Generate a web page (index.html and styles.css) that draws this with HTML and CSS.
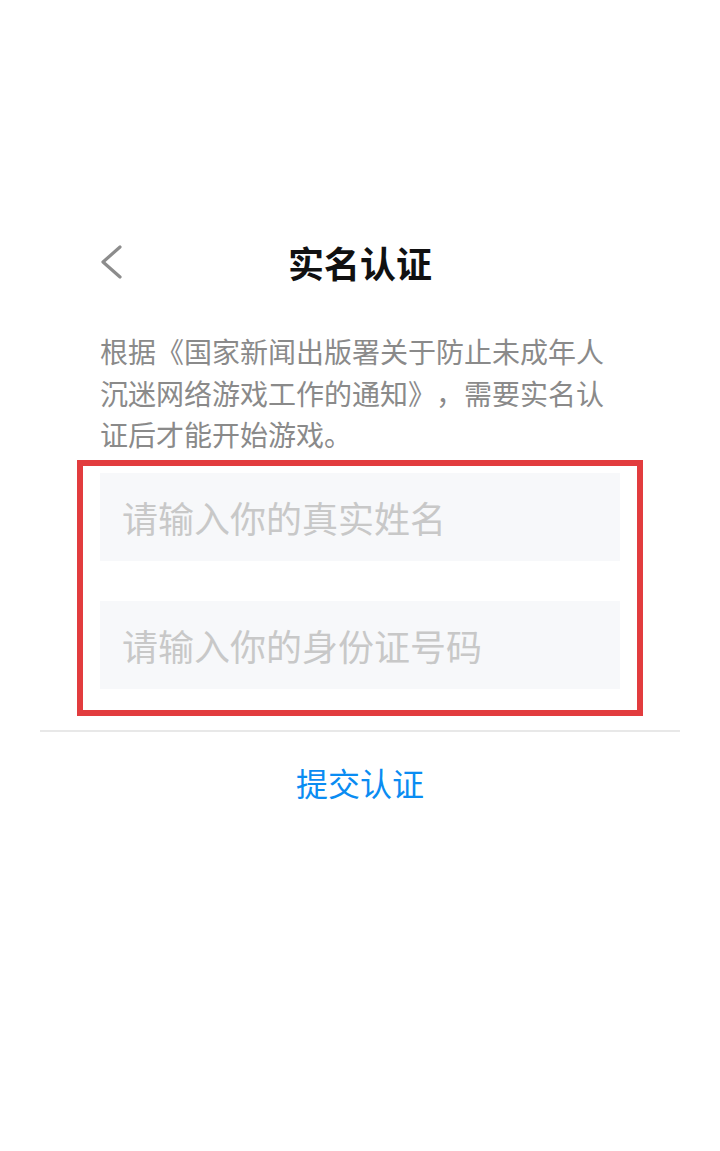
FILE: index.html
```html
<!DOCTYPE html>
<html lang="zh-CN">

<head>
  <meta charset="UTF-8">
  <meta name="viewport" content="width=device-width, initial-scale=1.0">
  <title>实名认证</title>
  <link rel="stylesheet" href="styles.css">
</head>

<body>
  <div class="page">
    <!-- header -->
    <div class="header">
      <a class="back" href="#">
        <svg width="24" height="36" viewBox="0 0 24 36">
          <polyline points="21,3 4,18 21,33" fill="none" stroke="#8c8c8c" stroke-width="3.2" stroke-linecap="round" stroke-linejoin="round" />
        </svg>
      </a>
      <div class="title">实名认证</div>
    </div>

    <p class="tip">根据《国家新闻出版署关于防止未成年人沉迷网络游戏工作的通知》，需要实名认证后才能开始游戏。</p>

    <!-- form -->
    <div class="form">
      <input class="field" type="text" placeholder="请输入你的真实姓名">
      <input class="field" type="text" placeholder="请输入你的身份证号码">
    </div>

    <div class="operation">
      <button class="btn-submit">提交认证</button>
    </div>
  </div>
</body>

</html>
```

FILE: styles.css
```css
/* reset start */
body {
  margin: 0;
  background: #ffffff;
  font-family: "Noto Sans CJK SC", "Noto Sans", sans-serif;
  text-spacing-trim: space-all;
}

/* reset end */

.page {
  width: 640px;
  margin: 0 auto;
  padding-top: 236px;
}

/* header start */
.header {
  display: grid;
  grid-template-columns: 1fr auto 1fr;
  align-items: center;
  height: 52px;
  padding: 0 60px;
}

.header .back {
  display: flex;
  align-items: center;
  margin-left: -1px;
}

.header .title {
  font-size: 36px;
  font-weight: bold;
  line-height: 52px;
  color: #111111;
}

/* header end */

.tip {
  margin: 43px 0 0;
  padding: 0 60px;
  font-size: 28px;
  line-height: 41.5px;
  color: #8a8a8a;
}

/* form start */
.form {
  display: flex;
  flex-direction: column;
  gap: 40px;
  margin: 4px 37px 0;
  padding: 7px 17px 21px;
  border: 6px solid #e23c3e;
}

.form .field {
  height: 88px;
  padding: 0 22px;
  border: none;
  outline: none;
  background: #f7f8fa;
  font-family: inherit;
  font-size: 36px;
  color: #333333;
}

.form .field::placeholder {
  color: #c8c8c8;
}

/* form end */

/* operation start */
.operation {
  margin-top: 14px;
  border-top: 2px solid #e8e8e8;
  text-align: center;
}

.operation .btn-submit {
  width: 100%;
  height: 100px;
  padding: 0;
  border: none;
  background: none;
  font-family: inherit;
  font-size: 32px;
  color: #0a8cf2;
  cursor: pointer;
  outline: none;
}

/* operation end */
```
